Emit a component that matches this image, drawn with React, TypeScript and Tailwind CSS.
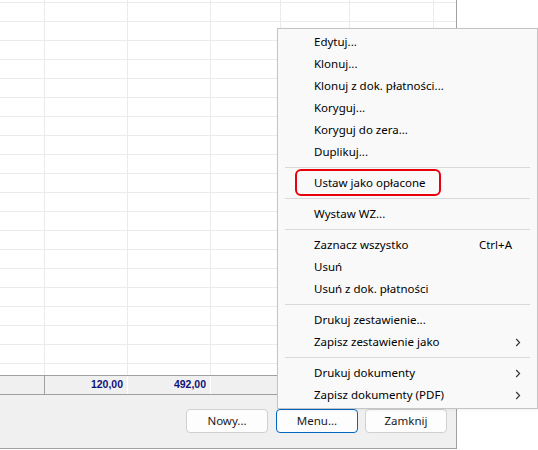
import React from "react";

const colW = [45, 83, 83, 70, 69, 84];

function GridRow({ h, last }: { h: number; last?: boolean }) {
  return (
    <div
      className={`flex shrink-0 ${last ? "" : "border-b border-[#ebebeb]"}`}
      style={{ height: h }}
    >
      {colW.map((w, i) => (
        <div key={i} className="shrink-0 border-r border-[#ebebeb]" style={{ width: w }} />
      ))}
      <div className="flex-1" />
    </div>
  );
}

type Item = { label: string; shortcut?: string; sub?: boolean } | "sep";

const items: Item[] = [
  { label: "Edytuj..." },
  { label: "Klonuj..." },
  { label: "Klonuj z dok. płatności..." },
  { label: "Koryguj..." },
  { label: "Koryguj do zera..." },
  { label: "Duplikuj..." },
  "sep",
  { label: "Ustaw jako opłacone" },
  "sep",
  { label: "Wystaw WZ..." },
  "sep",
  { label: "Zaznacz wszystko", shortcut: "Ctrl+A" },
  { label: "Usuń" },
  { label: "Usuń z dok. płatności" },
  "sep",
  { label: "Drukuj zestawienie..." },
  { label: "Zapisz zestawienie jako", sub: true },
  "sep",
  { label: "Drukuj dokumenty", sub: true },
  { label: "Zapisz dokumenty (PDF)", sub: true },
];

function Chevron() {
  return (
    <svg width="6" height="9" viewBox="0 0 6 9" className="block">
      <path d="M1.2 1 L4.6 4.5 L1.2 8" fill="none" stroke="#303030" strokeWidth="1.1" />
    </svg>
  );
}

function Btn({ label, focus }: { label: string; focus?: boolean }) {
  return (
    <div
      className={`w-[82px] h-[24px] flex items-center justify-center rounded-[4px] bg-[#fdfdfd] text-[11.5px] text-[#1a1a1a] ${
        focus ? "border border-[#0067c0]" : "border border-[#d0d0d0]"
      }`}
    >
      {label}
    </div>
  );
}

export default function App() {
  const rows = [] as React.ReactNode[];
  rows.push(<GridRow key="r0" h={3} />);
  for (let i = 0; i < 19; i++) rows.push(<GridRow key={"r" + (i + 1)} h={19} />);

  return (
    <div
      className="relative w-[538px] h-[450px] bg-white overflow-hidden text-black"
      style={{ fontFamily: '"Segoe UI", "Noto Sans", sans-serif' }}
    >
      {/* window */}
      <div className="w-[457px] h-[449px] flex flex-col border-r border-b border-[#a0a0a0]">
        <div className="h-[375px] flex flex-col bg-white overflow-hidden">
          {rows}
          <div className="flex flex-1">
            {colW.map((w, i) => (
              <div key={i} className="shrink-0 border-r border-[#ebebeb]" style={{ width: w }} />
            ))}
            <div className="flex-1" />
          </div>
        </div>
        {/* totals */}
        <div
          className="h-[20px] flex border-y border-[#a0a0a0] bg-[#f0f0f0] text-[10.5px] font-bold text-[#10107a]"
          style={{ fontFamily: '"Liberation Sans", Arial, sans-serif' }}
        >
          <div className="w-[45px] border-r border-[#a0a0a0]" />
          <div className="w-[83px] border-r border-white flex items-center justify-end pr-[4px]">120,00</div>
          <div className="w-[83px] border-r border-white flex items-center justify-end pr-[4px]">492,00</div>
          <div className="flex-1" />
        </div>
        {/* bottom panel */}
        <div className="flex-1 bg-[#f0f0f0] flex justify-end items-start pt-[14px] pr-[9px]">
          <Btn label="Nowy..." />
          <div className="w-[8px]" />
          <Btn label="Menu..." focus />
          <div className="w-[7px]" />
          <Btn label="Zamknij" />
        </div>
      </div>

      {/* context menu */}
      <div className="absolute left-[277px] top-[28px] w-[261px] h-[381px] bg-[#f9f9f9] border border-[#c4c4c4] pt-[2px] pb-[2px] flex flex-col text-[11.5px] shadow-[1px_1px_3px_rgba(0,0,0,0.06)]">
        {items.map((it, i) =>
          it === "sep" ? (
            <div key={i} className="h-[9px] shrink-0 pt-[4px] px-[7px]">
              <div className="h-px bg-[#d9d9d9]" />
            </div>
          ) : (
            <div
              key={i}
              className={`h-[22px] shrink-0 flex items-center justify-between pl-[36px] ${
                it.sub ? "pr-[16px]" : "pr-[25px]"
              }`}
            >
              <span>{it.label}</span>
              {it.shortcut && <span>{it.shortcut}</span>}
              {it.sub && <Chevron />}
            </div>
          )
        )}
      </div>

      {/* red highlight annotation */}
      <div className="absolute left-[295px] top-[169px] w-[146px] h-[27px] border-2 border-[#e8000b] rounded-[6px]" />
    </div>
  );
}
